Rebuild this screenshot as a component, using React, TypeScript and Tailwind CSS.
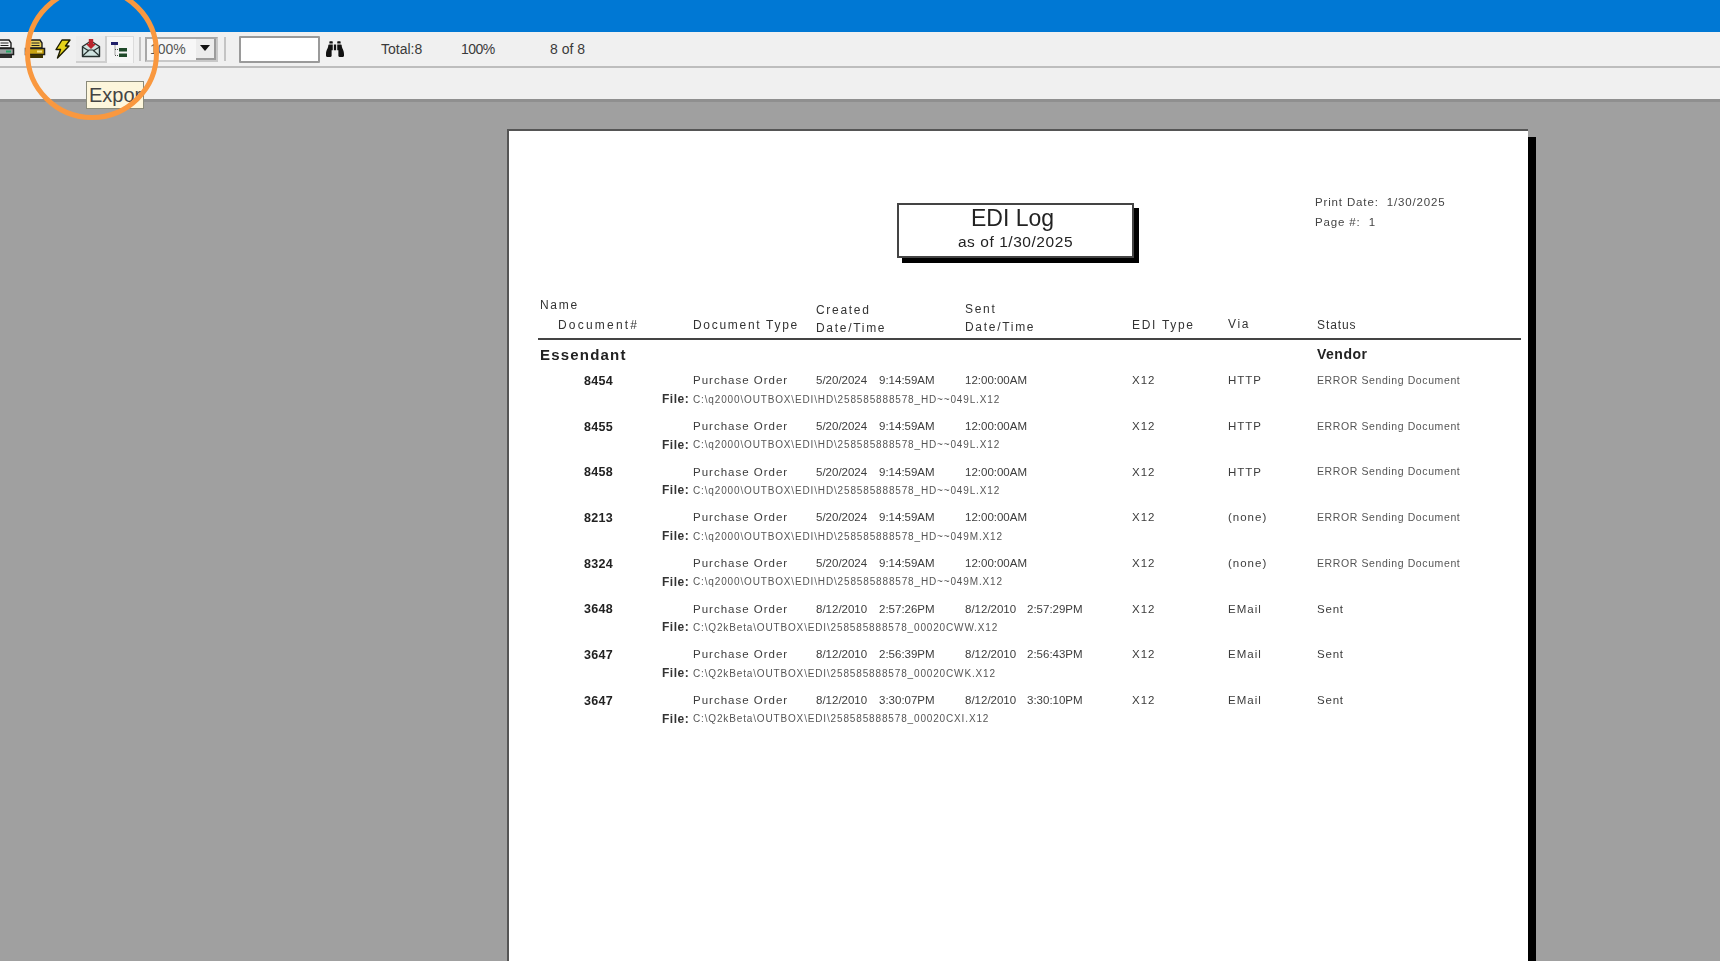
import { FaBinoculars } from 'react-icons/fa';

const ROWS = [
  { num: '8454', created: '5/20/2024', createdAt: '9:14:59AM', sent: '', sentAt: '12:00:00AM', via: 'HTTP', status: 'ERROR Sending Document', file: 'C:\\q2000\\OUTBOX\\EDI\\HD\\258585888578_HD~~049L.X12' },
  { num: '8455', created: '5/20/2024', createdAt: '9:14:59AM', sent: '', sentAt: '12:00:00AM', via: 'HTTP', status: 'ERROR Sending Document', file: 'C:\\q2000\\OUTBOX\\EDI\\HD\\258585888578_HD~~049L.X12' },
  { num: '8458', created: '5/20/2024', createdAt: '9:14:59AM', sent: '', sentAt: '12:00:00AM', via: 'HTTP', status: 'ERROR Sending Document', file: 'C:\\q2000\\OUTBOX\\EDI\\HD\\258585888578_HD~~049L.X12' },
  { num: '8213', created: '5/20/2024', createdAt: '9:14:59AM', sent: '', sentAt: '12:00:00AM', via: '(none)', status: 'ERROR Sending Document', file: 'C:\\q2000\\OUTBOX\\EDI\\HD\\258585888578_HD~~049M.X12' },
  { num: '8324', created: '5/20/2024', createdAt: '9:14:59AM', sent: '', sentAt: '12:00:00AM', via: '(none)', status: 'ERROR Sending Document', file: 'C:\\q2000\\OUTBOX\\EDI\\HD\\258585888578_HD~~049M.X12' },
  { num: '3648', created: '8/12/2010', createdAt: '2:57:26PM', sent: '8/12/2010', sentAt: '2:57:29PM', via: 'EMail', status: 'Sent', file: 'C:\\Q2kBeta\\OUTBOX\\EDI\\258585888578_00020CWW.X12' },
  { num: '3647', created: '8/12/2010', createdAt: '2:56:39PM', sent: '8/12/2010', sentAt: '2:56:43PM', via: 'EMail', status: 'Sent', file: 'C:\\Q2kBeta\\OUTBOX\\EDI\\258585888578_00020CWK.X12' },
  { num: '3647', created: '8/12/2010', createdAt: '3:30:07PM', sent: '8/12/2010', sentAt: '3:30:10PM', via: 'EMail', status: 'Sent', file: 'C:\\Q2kBeta\\OUTBOX\\EDI\\258585888578_00020CXI.X12' },
];

const COLS = 'grid grid-cols-[153px_123px_149px_167px_96px_89px_1fr]';

function PrinterIcon({ gold }: { gold?: boolean }) {
  return (
    <svg width="22" height="20" viewBox="0 0 22 20" className="shrink-0">
      <path d="M6 1h10l2 3v5H5V3z" fill={gold ? '#e8cf5a' : '#f4f4f4'} stroke="#1e1e1e" strokeWidth="1.400" />
      <path d="M7.500 4h8M7.500 6.500h8" stroke="#222" strokeWidth="1.100" />
      <path d="M1.500 9.500h19v6h-19z" fill={gold ? '#c9a312' : '#9aa0a0'} stroke="#1e1e1e" strokeWidth="1.500" />
      <path d="M3 15.500h16V19H3z" fill={gold ? '#3d3300' : '#2d2d2d'} />
      <rect x="13" y="11.500" width="5" height="2" fill={gold ? '#f5e58a' : '#25a566'} />
    </svg>
  );
}

function BoltIcon() {
  return (
    <svg width="17" height="20" viewBox="0 0 17 20" className="shrink-0">
      <path d="M8 1h8l-4.500 6H15L3.500 19l3-8.500H2z" fill="#e6d31a" stroke="#1c1c00" strokeWidth="1.400" strokeLinejoin="round" />
    </svg>
  );
}

function ExportIcon() {
  return (
    <svg width="20" height="20" viewBox="0 0 20 20">
      <path d="M1.500 8.500 10 3l8.500 5.500V18.500h-17z" fill="#cfe3e0" stroke="#26302f" strokeWidth="1.400" strokeLinejoin="round" />
      <path d="M1.500 18 8 12h4l6.500 6M1.500 9 8 13M18.500 9 12 13" fill="none" stroke="#26302f" strokeWidth="1.200" />
      <path d="M7.800 1h4.400v5H15l-5 5-5-5h2.800z" fill="#b8242c" />
    </svg>
  );
}

function TreeIcon() {
  return (
    <svg width="20" height="20" viewBox="0 0 20 20">
      <rect x="1" y="2" width="7" height="3" fill="#20206a" />
      <path d="M5 5.500v10M5 9.500h4M5 15.500h4" stroke="#555" strokeWidth="1" strokeDasharray="1 1" fill="none" />
      <rect x="9" y="8" width="8" height="3.500" fill="#1f4a2a" />
      <rect x="9" y="13.500" width="8" height="3.500" fill="#1f4a2a" />
    </svg>
  );
}

function Separator() {
  return <div className="w-0.5 h-[24px] bg-[#c4c4c4] shrink-0" />;
}

function Toolbar() {
  return (
    <div className="h-[36px] flex items-center border-b-2 border-[#bdbdbd] bg-[#f0f0f0] shrink-0">
      <div className="-ml-[7px] shrink-0"><PrinterIcon /></div>
      <div className="ml-[9px]"><PrinterIcon gold /></div>
      <div className="ml-[8px]"><BoltIcon /></div>
      <div className="ml-[5px] w-[31px] h-[27px] flex items-center justify-center border-r-2 border-b-2 border-[#cfcfcf] bg-[#ececec] shrink-0"><ExportIcon /></div>
      <div className="w-[27px] h-[27px] flex items-center justify-center border-t border-r border-[#dcdcdc] bg-[#f6f6f6] shrink-0"><TreeIcon /></div>
      <div className="ml-[5px]"><Separator /></div>
      <div className="ml-[4px] w-[73px] h-[25px] flex items-center justify-between border-2 border-t-[#a8a8a8] border-l-[#a8a8a8] border-r-[#c8c8c8] border-b-[#c8c8c8] bg-[#f7f7f7] shrink-0">
        <span className="text-[14px] text-[#555] pl-[3px]">100%</span>
        <div className="w-[20px] h-[21px] flex items-center justify-center bg-[#ececec] border-r-2 border-b-2 border-[#9c9c9c]">
          <svg width="10" height="6" viewBox="0 0 10 6"><path d="M0 0h10L5 6z" fill="#111" /></svg>
        </div>
      </div>
      <div className="ml-[6px]"><Separator /></div>
      <div className="ml-[13px] w-[81px] h-[27px] bg-white border-2 border-[#9a9a9a] rounded-[1px] shrink-0" />
      <FaBinoculars className="ml-[5px] w-[20px] h-[18px] text-[#111] shrink-0" />
      <span className="ml-[36px] w-[80px] text-[14px] text-[#3a3a3a]">Total:8</span>
      <span className="w-[89px] text-[14px] text-[#3a3a3a] tracking-[-0.5px]">100%</span>
      <span className="text-[14px] text-[#3a3a3a]">8 of 8</span>
    </div>
  );
}

function ReportRow({ r }: { r: (typeof ROWS)[number] }) {
  return (
    <div className="h-[45.7px]">
      <div className={`${COLS} h-[18px] items-center text-[11.5px] text-[#3c3c3c]`}>
        <div className="pl-[44px] pt-[1px] font-bold text-[12.500px] tracking-[0.3px] text-[#222]">{r.num}</div>
        <div className="tracking-[1px]">Purchase Order</div>
        <div className="whitespace-nowrap"><span className="inline-block w-[63px]">{r.created}</span>{r.createdAt}</div>
        <div className="whitespace-nowrap">{r.sent ? <span className="inline-block w-[62px]">{r.sent}</span> : null}{r.sentAt}</div>
        <div className="tracking-[1px]">X12</div>
        <div className="tracking-[1px]">{r.via}</div>
        <div className={r.status === 'Sent' ? 'tracking-[0.8px]' : 'text-[10.500px] text-[#555] tracking-[0.6px] whitespace-nowrap'}>{r.status}</div>
      </div>
      <div className="flex items-center h-[18px] pl-[122px] pt-[2px]">
        <span className="w-[31px] text-[12px] font-bold text-[#333] tracking-[0.5px]">File:</span>
        <span className="text-[10px] text-[#555] tracking-[0.85px] whitespace-nowrap">{r.file}</span>
      </div>
    </div>
  );
}

function ReportPage() {
  return (
    <div className="w-[1021px] h-[900px] shrink-0 bg-white border-t-2 border-l-2 border-[#555] shadow-[8px_8px_0_#000] pl-[29px] blur-[0.3px]">
      {/* Title block */}
      <div className="h-[131px] relative">
        <div className="flex pt-[72px]">
          <div className="ml-[359px] w-[237px] h-[55px] border-2 border-[#444] shadow-[5px_5px_0_#000] flex flex-col items-center text-[#222] bg-white">
            <div className="text-[23px] leading-[27px] -ml-[6px]">EDI Log</div>
            <div className="text-[15.500px] leading-[20px] tracking-[0.55px]">as of 1/30/2025</div>
          </div>
          <div className="ml-[181px] text-[11.500px] text-[#444] tracking-[0.85px] leading-[20px] -mt-[11px] whitespace-nowrap">
            <div>Print Date:&nbsp; 1/30/2025</div>
            <div>Page #:&nbsp; 1</div>
          </div>
        </div>
      </div>

      {/* Column headers */}
      <div className="w-[983px] h-[78px] border-b-2 border-[#444] pl-[2px] text-[12px] text-[#333] tracking-[1.700px]">
        <div className={`${COLS} h-[76px] items-end whitespace-nowrap`}>
          <div className="leading-[20px] pb-[3px]">
            <div>Name</div>
            <div className="pl-[18px] tracking-[2.200px]">Document#</div>
          </div>
          <div className="pb-[4px]">Document Type</div>
          <div className="leading-[18px] pb-[1px]"><div>Created</div><div>Date/Time</div></div>
          <div className="leading-[18px] pb-[2px]"><div>Sent</div><div>Date/Time</div></div>
          <div className="pb-[4px]">EDI Type</div>
          <div className="pb-[5px]">Via</div>
          <div className="pb-[4px] tracking-[0.9px]">Status</div>
        </div>
      </div>

      {/* Group heading */}
      <div className={`${COLS} w-[983px] pl-[2px] pt-[4px] h-[31px] font-bold text-[#222]`}>
        <div className="col-span-6 text-[15px] tracking-[1.200px]">Essendant</div>
        <div className="text-[14px] tracking-[0.5px]">Vendor</div>
      </div>

      <div className="pl-[2px]">
        {ROWS.map((r, i) => (
          <ReportRow key={i} r={r} />
        ))}
      </div>
    </div>
  );
}

export default function App() {
  return (
    <div className="relative w-[1720px] h-[961px] overflow-hidden flex flex-col bg-[#a0a0a0] font-['Liberation_Sans',sans-serif]">
      <div className="h-[32px] bg-[#0078d4] shrink-0" />
      <Toolbar />
      <div className="h-[34px] bg-[#f0f0f0] border-b-[3px] border-[#8f8f8f] shrink-0" />
      <div className="pl-[507px] pt-[27px]">
        <ReportPage />
      </div>

      {/* Tooltip and the orange highlight ring drawn over the screenshot */}
      <div className="absolute left-[86px] top-[81px] w-[58px] h-[28px] bg-[#fdf6dc] border border-[#8a8a7a] text-[20px] leading-[26px] text-[#444] pl-[2px] overflow-hidden">
        Expor
      </div>
      <div className="absolute left-[25px] top-[-14px] w-[134px] h-[134px] rounded-full border-[5px] border-[#f9983f]" />
    </div>
  );
}
